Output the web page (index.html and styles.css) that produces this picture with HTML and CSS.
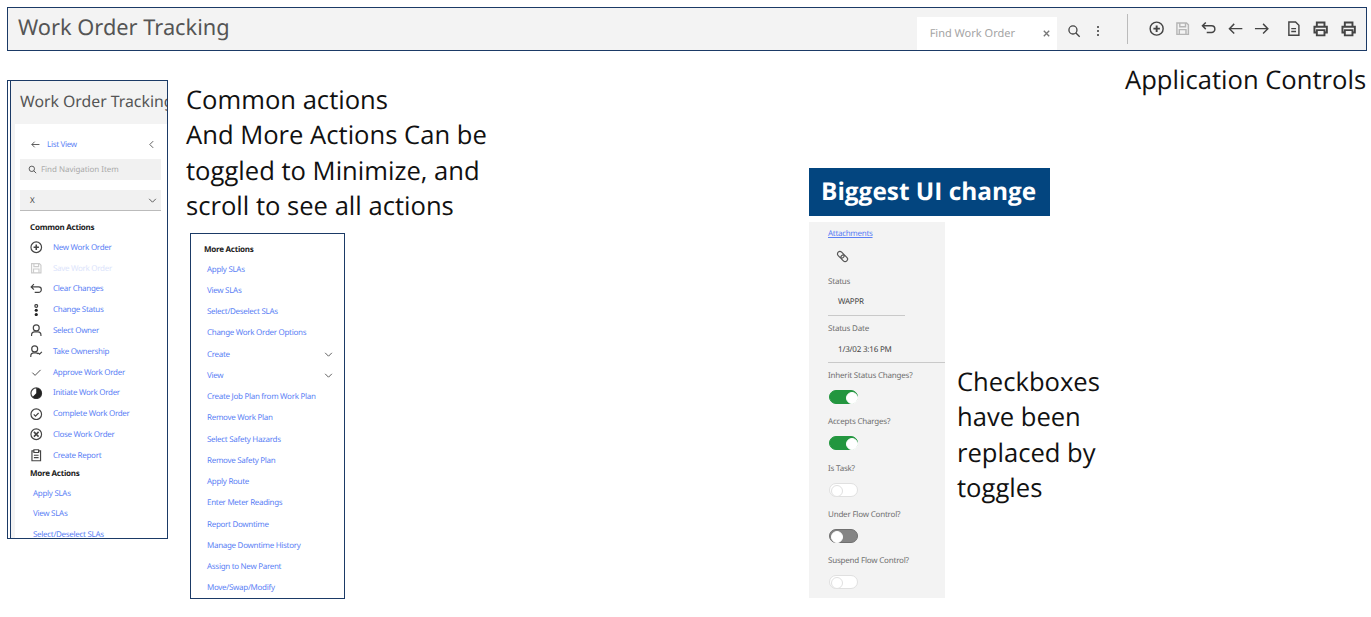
FILE: index.html
```html
<!DOCTYPE html>
<html lang="en">
<head>
    <meta charset="UTF-8">
    <title>Work Order Tracking - UI changes</title>
    <link rel="stylesheet" href="styles.css">
</head>
<body>
    <!-- application header -->
    <header class="shot app-bar">
        <h1 class="app-title">Work Order Tracking</h1>
        <div class="find-box">
            <span>Find Work Order</span>
            <svg class="ico-sm" viewBox="0 0 10 10"><path d="M2 2l6 6M8 2l-6 6"/></svg>
        </div>
        <svg class="bar-ico search-ico" viewBox="0 0 16 16"><circle cx="6.800" cy="6.800" r="4.600"/><path d="M10.200 10.200l4.300 4.300"/></svg>
        <div class="kebab"><i></i><i></i><i></i></div>
        <div class="bar-divider"></div>
        <div class="bar-icons">
            <svg viewBox="0 0 16 16"><circle cx="8" cy="8" r="6.800"/><path class="thick" d="M8 4.600v6.800M4.600 8h6.800"/></svg>
            <svg class="muted" viewBox="0 0 16 16"><path d="M2 2h10l2 2v10H2zM5 2v4h6V2M4.500 14V9h7v5"/></svg>
            <svg viewBox="0 0 16 16"><path d="M1.500 5h9.500a3.500 3.500 0 0 1 0 7H6M5 1.500L1.500 5 5 8.500"/></svg>
            <svg viewBox="0 0 16 16"><path d="M15 8H1.500M6.500 3L1.500 8l5 5"/></svg>
            <svg viewBox="0 0 16 16"><path d="M1 8h13.500M9.500 3l5 5-5 5"/></svg>
            <svg class="doc-ico" viewBox="0 0 16 16"><path d="M3 1h7l3.500 3.500V15H3zM5.500 8h5M5.500 11h5"/></svg>
            <svg class="print-ico" viewBox="0 0 16 16"><path class="thick" d="M4 6V1.500h8V6M4 12H1.500V6h13v6H12M4 9.500h8V15H4z"/></svg>
            <svg class="print-ico" viewBox="0 0 16 16"><path class="thick" d="M4 6V1.500h8V6M4 12H1.500V6h13v6H12M4 9.500h8V15H4z"/></svg>
        </div>
    </header>
    <p class="note note-controls">Application Controls</p>

    <!-- navigation panel -->
    <section class="shot nav-panel">
        <div class="nav-head">Work Order Tracking</div>
        <div class="nav-body">
            <div class="list-view">
                <svg class="row-ico back-ico" viewBox="0 0 16 16"><path d="M15 8H1.500M6.500 3L1.500 8l5 5"/></svg>
                <a class="link">List View</a>
                <svg class="row-ico collapse-ico" viewBox="0 0 16 16"><path d="M11 2L5 8l6 6"/></svg>
            </div>
            <div class="nav-find">
                <svg class="row-ico" viewBox="0 0 16 16"><circle cx="6.800" cy="6.800" r="4.800"/><path d="M10.200 10.200l4.300 4.300"/></svg>
                <span>Find Navigation Item</span>
            </div>
            <div class="nav-select">
                <span>X</span>
                <svg class="row-ico" viewBox="0 0 16 16"><path d="M2 5l6 6 6-6"/></svg>
            </div>
            <h3 class="group-title common-title">Common Actions</h3>
            <ul class="action-list">
                <li><svg viewBox="0 0 16 16"><circle cx="8" cy="8" r="6.800"/><path class="thick" d="M8 4.600v6.800M4.600 8h6.800"/></svg><a class="link">New Work Order</a></li>
                <li class="disabled"><svg viewBox="0 0 16 16"><path d="M2 2h10l2 2v10H2zM5 2v4h6V2M4.500 14V9h7v5"/></svg><a class="link">Save Work Order</a></li>
                <li><svg viewBox="0 0 16 16"><path d="M1.500 5h9.500a3.500 3.500 0 0 1 0 7H6M5 1.500L1.500 5 5 8.500"/></svg><a class="link">Clear Changes</a></li>
                <li><svg viewBox="0 0 16 16"><circle cx="8" cy="2.500" r="1.800"/><circle class="solid" cx="8" cy="8" r="2"/><circle class="solid" cx="8" cy="13.500" r="2"/></svg><a class="link">Change Status</a></li>
                <li><svg viewBox="0 0 16 16"><circle cx="8" cy="5" r="3.800"/><path d="M2 15.500v-1.500a4 4 0 0 1 4-4h4a4 4 0 0 1 4 4v1.500"/></svg><a class="link">Select Owner</a></li>
                <li><svg viewBox="0 0 16 16"><circle cx="6" cy="5" r="3.800"/><path d="M1 15.500v-1.500a4 4 0 0 1 4-4h2.500a4 4 0 0 1 3 1.500M10.500 10l1.700 1.700 3-3"/></svg><a class="link">Take Ownership</a></li>
                <li><svg viewBox="0 0 16 16"><path class="thin" d="M3 8.500l3.500 3.500 7-7"/></svg><a class="link">Approve Work Order</a></li>
                <li><svg viewBox="0 0 16 16"><circle cx="8" cy="8" r="6.800"/><path class="solid" d="M8 1.200a6.800 6.800 0 1 1-4.800 11.600L8 8z"/></svg><a class="link">Initiate Work Order</a></li>
                <li><svg viewBox="0 0 16 16"><circle cx="8" cy="8" r="6.800"/><path d="M4.800 8.200l2.200 2.200 4-4"/></svg><a class="link">Complete Work Order</a></li>
                <li><svg viewBox="0 0 16 16"><circle cx="8" cy="8" r="6.800"/><path class="thick" d="M5 5l6 6M11 5l-6 6"/></svg><a class="link">Close Work Order</a></li>
                <li><svg viewBox="0 0 16 16"><path d="M5 2.500H2.500V15h11V2.500H11M5 1h6v3.500H5zM5 8h6M5 11h6"/></svg><a class="link">Create Report</a></li>
            </ul>
            <h3 class="group-title more-title">More Actions</h3>
            <ul class="more-list nav-more">
                <li><a class="link">Apply SLAs</a></li>
                <li><a class="link">View SLAs</a></li>
                <li><a class="link">Select/Deselect SLAs</a></li>
            </ul>
        </div>
    </section>

    <div class="note note-common">
        Common actions<br>
        And More Actions Can be<br>
        toggled to Minimize, and<br>
        scroll to see all actions
    </div>

    <!-- more actions panel -->
    <section class="shot more-panel">
        <h3 class="group-title">More Actions</h3>
        <ul class="more-list">
            <li><a class="link">Apply SLAs</a></li>
            <li><a class="link">View SLAs</a></li>
            <li><a class="link">Select/Deselect SLAs</a></li>
            <li><a class="link">Change Work Order Options</a></li>
            <li><a class="link">Create</a><svg class="row-ico" viewBox="0 0 16 16"><path d="M2 5l6 6 6-6"/></svg></li>
            <li><a class="link">View</a><svg class="row-ico" viewBox="0 0 16 16"><path d="M2 5l6 6 6-6"/></svg></li>
            <li><a class="link">Create Job Plan from Work Plan</a></li>
            <li><a class="link">Remove Work Plan</a></li>
            <li><a class="link">Select Safety Hazards</a></li>
            <li><a class="link">Remove Safety Plan</a></li>
            <li><a class="link">Apply Route</a></li>
            <li><a class="link">Enter Meter Readings</a></li>
            <li><a class="link">Report Downtime</a></li>
            <li><a class="link">Manage Downtime History</a></li>
            <li><a class="link">Assign to New Parent</a></li>
            <li><a class="link">Move/Swap/Modify</a></li>
        </ul>
    </section>

    <!-- toggles -->
    <div class="banner">Biggest UI change</div>
    <section class="field-panel">
        <a class="link attach-link">Attachments</a>
        <svg class="clip-ico" viewBox="0 0 16 16"><g transform="rotate(45 8 8)"><rect x="0.500" y="5" width="9" height="6" rx="3"/><rect x="6.500" y="5" width="9" height="6" rx="3"/></g></svg>
        <label class="field-label status-label">Status</label>
        <div class="field-value short">WAPPR</div>
        <label class="field-label">Status Date</label>
        <div class="field-value date-value">1/3/02 3:16 PM</div>
        <label class="field-label">Inherit Status Changes?</label>
        <span class="toggle on"></span>
        <label class="field-label">Accepts Charges?</label>
        <span class="toggle on"></span>
        <label class="field-label">Is Task?</label>
        <span class="toggle"></span>
        <label class="field-label">Under Flow Control?</label>
        <span class="toggle dark"></span>
        <label class="field-label">Suspend Flow Control?</label>
        <span class="toggle"></span>
    </section>

    <div class="note note-toggles">
        Checkboxes<br>
        have been<br>
        replaced by<br>
        toggles
    </div>
</body>
</html>
```

FILE: styles.css
```css
* {
    box-sizing: border-box;
}
html, body {
    margin: 0;
    padding: 0;
}
body {
    position: relative;
    width: 1371px;
    height: 617px;
    overflow: hidden;
    background: #fff;
    font-family: "Noto Sans", Arial, sans-serif;
    color: #333;
    text-rendering: geometricPrecision;
}
ul {
    list-style: none;
    margin: 0;
    padding: 0;
}
svg {
    fill: none;
    stroke: #444;
    stroke-width: 1.5;
    flex: none;
}
svg .thick {
    stroke-width: 2;
}
svg .thin {
    stroke-width: 1.2;
}
svg .solid {
    fill: #222;
    stroke: none;
}
.link {
    color: #5b7ff5;
    font-size: 8px;
    letter-spacing: -0.3px;
}

/* slide pieces sit on a free canvas */
.shot, .note, .banner, .field-panel {
    position: absolute;
}
.note {
    margin: 0;
    font-family: "Open Sans", Arial, sans-serif;
    font-size: 25.600px;
    line-height: 35.300px;
    color: #111;
    white-space: nowrap;
}
.note-controls {
    left: 1125px;
    top: 62px;
}
.note-common {
    left: 186px;
    top: 82px;
}
.note-toggles {
    left: 957px;
    top: 364px;
}

/* header */
.app-bar {
    left: 7px;
    top: 7px;
    width: 1360px;
    height: 44px;
    background: #f3f3f3;
    border: 1px solid #1b3a66;
    display: flex;
    align-items: center;
    padding-left: 10px;
}
.app-title {
    margin: 0;
    font-family: "Noto Sans", sans-serif;
    font-weight: 400;
    font-size: 21.800px;
    color: #555;
    flex: 1;
    padding-bottom: 4px;
}
.find-box {
    width: 140px;
    height: 33px;
    margin-top: 9px;
    background: #fff;
    display: flex;
    align-items: center;
    justify-content: space-between;
    padding: 0 6px 0 13px;
    font-size: 11px;
    color: #a4a4a4;
}
.ico-sm {
    width: 9px;
    height: 9px;
    stroke: #777;
}
.bar-ico {
    width: 14px;
    height: 14px;
}
.search-ico {
    margin-left: 10px;
    margin-top: 3px;
}
.kebab {
    margin-left: 16px;
    margin-top: 4px;
    display: flex;
    flex-direction: column;
    gap: 2px;
}
.kebab i {
    width: 2px;
    height: 2px;
    background: #666;
}
.bar-divider {
    width: 1px;
    height: 30px;
    margin: 0 21px 0 28px;
    background: #bbb;
}
.bar-icons {
    display: flex;
    align-items: center;
    flex: none;
    gap: 11px;
    padding-right: 10px;
}
.bar-icons svg {
    width: 15.300px;
    height: 15.300px;
}
.bar-icons .muted {
    stroke: #b5b5b5;
}
.bar-icons .doc-ico {
    margin-left: 6px;
}
.bar-icons .print-ico {
    margin-left: 1px;
}

/* nav panel */
.nav-panel {
    left: 7px;
    top: 80px;
    width: 161px;
    height: 459px;
    border: 1px solid #1b3a66;
    overflow: hidden;
    padding-left: 2px;
    background: #fff;
}
.nav-head {
    height: 43px;
    padding: 9px 0 0 9px;
    border-left: 1px solid #1b3a66;
    background: #f3f3f3;
    font-size: 15.800px;
    color: #555;
    white-space: nowrap;
    overflow: hidden;
}
.nav-body {
    padding: 0 6px 0 9px;
    border-left: 1px solid #1b3a66;
    box-shadow: inset 4px 0 0 #f3f3f3;
}
.row-ico {
    width: 9px;
    height: 9px;
}
.list-view {
    height: 40px;
    display: flex;
    align-items: center;
    padding-left: 11px;
}
.list-view .link {
    margin-left: 7px;
    flex: 1;
}
.collapse-ico {
    margin-right: 5px;
}
.nav-find {
    height: 21px;
    margin-top: -5px;
    background: #f1f1f1;
    display: flex;
    align-items: center;
    gap: 4px;
    padding-left: 8px;
    font-size: 8px;
    letter-spacing: -0.05px;
    color: #aaa;
}
.nav-select {
    height: 21px;
    margin-top: 10px;
    background: #f1f1f1;
    border-bottom: 1px solid #bbb;
    display: flex;
    align-items: center;
    justify-content: space-between;
    padding: 0 4px 0 10px;
    font-size: 8px;
    color: #444;
}
.group-title {
    margin: 0;
    font-size: 8px;
    letter-spacing: -0.25px;
    font-weight: 700;
    color: #222;
}
.common-title {
    margin: 11px 0 0 10px;
}
.action-list {
    margin-top: 4px;
}
.action-list li {
    height: 20.800px;
    display: flex;
    align-items: center;
    margin-left: 10px;
}
.action-list svg {
    width: 12.500px;
    height: 12.500px;
    margin-right: 10.500px;
}
.action-list .disabled svg {
    stroke: #ccc;
}
.action-list .disabled .link {
    color: #dce4fb;
}
.more-title {
    margin: 2px 0 0 10px;
}
.more-list li {
    height: 21.250px;
    display: flex;
    align-items: center;
    justify-content: space-between;
}
.nav-more {
    margin: 4px 0 0 13px;
}
.nav-more li {
    height: 20.500px;
}

/* more actions panel */
.more-panel {
    left: 190px;
    top: 233px;
    width: 155px;
    height: 366px;
    border: 1px solid #1b3a66;
    padding: 10px 11px 0 13px;
    background: #fff;
}
.more-panel .more-list {
    margin: 3.500px 0 0 3px;
}

/* toggles panel */
.banner {
    left: 809px;
    top: 168px;
    width: 241px;
    height: 48px;
    background: #03457f;
    color: #fff;
    font-family: "Open Sans", Arial, sans-serif;
    font-weight: 700;
    font-size: 24.400px;
    line-height: 48px;
    padding-left: 12px;
}
.field-panel {
    left: 809px;
    top: 222px;
    width: 136px;
    height: 376px;
    background: #f3f3f3;
    padding: 6px 0 0 19px;
    display: flex;
    flex-direction: column;
    align-items: flex-start;
}
.field-panel > * {
    flex: none;
}
.attach-link {
    text-decoration: underline;
    line-height: 11px;
}
.clip-ico {
    width: 13px;
    height: 13px;
    margin: 11px 0 0 8px;
    stroke: #555;
}
.field-label {
    font-size: 8px;
    letter-spacing: -0.2px;
    line-height: 11px;
    color: #6f6f6f;
}
.status-label {
    margin-top: 13px;
}
.field-value {
    width: 117px;
    height: 29px;
    padding: 9px 0 0 10px;
    border-bottom: 1px solid #c9c9c9;
    font-size: 8px;
    letter-spacing: -0.2px;
    line-height: 11px;
    color: #444;
    margin-bottom: 7px;
}
.field-value.short {
    width: 77px;
}
.field-value.date-value {
    padding-top: 10px;
}
.toggle {
    position: relative;
    width: 29px;
    height: 14px;
    margin: 9px 0 12.250px 1px;
    border-radius: 7px;
    background: #fff;
    border: 1px solid #e0e0e0;
}
.toggle::after {
    content: "";
    position: absolute;
    left: 1px;
    top: 1px;
    width: 10px;
    height: 10px;
    border-radius: 50%;
    background: #fff;
    border: 1px solid #e0e0e0;
}
.toggle.on {
    background: #23963f;
    border-color: #23963f;
}
.toggle.on::after {
    left: 16px;
    border-color: #fff;
}
.toggle.dark {
    background: #858585;
    border-color: #707070;
}
.toggle.dark::after {
    border-color: #fff;
}
```
